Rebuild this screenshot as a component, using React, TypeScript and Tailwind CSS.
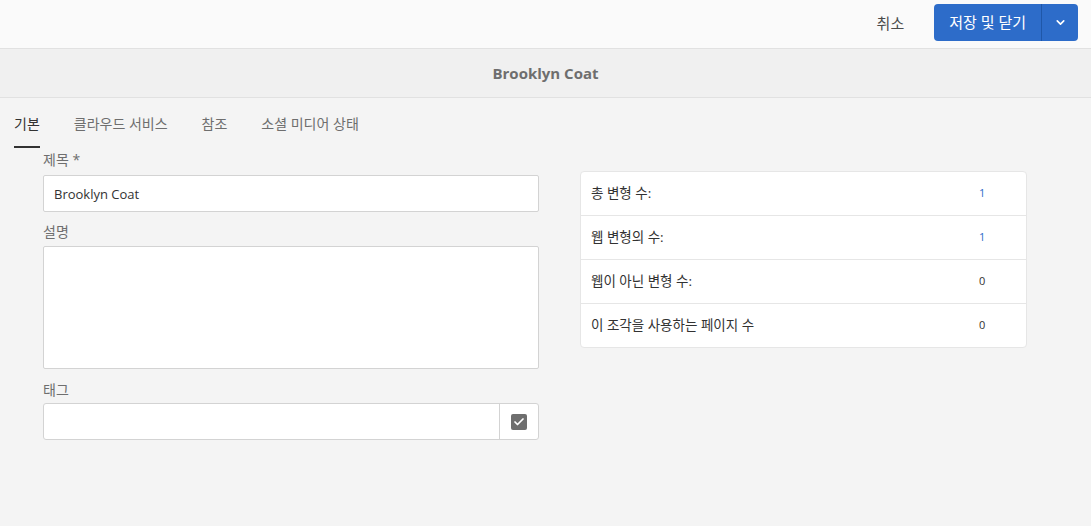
import { ChevronDown, Check } from "lucide-react"

const font = { fontFamily: '"Open Sans", "Noto Sans CJK KR", sans-serif' }

const stats = [
  { label: "총 변형 수:", value: "1", link: true },
  { label: "웹 변형의 수:", value: "1", link: true },
  { label: "웹이 아닌 변형 수:", value: "0", link: false },
  { label: "이 조각을 사용하는 페이지 수", value: "0", link: false },
]

const tabs = ["기본", "클라우드 서비스", "참조", "소셜 미디어 상태"]

export default function App() {
  return (
    <div className="w-[1091px] h-[526px] bg-[#f4f4f4] text-[#4b4b4b] overflow-hidden" style={font}>
      {/* top action bar */}
      <div className="h-[49px] bg-[#fafafa] border-b border-[#e1e1e1] flex items-center justify-end pr-[13px]">
        <button className="text-[15px] text-[#4b4b4b] mr-[30px] mt-[-2px]">취소</button>
        <div className="flex h-[37px] mt-[-3px] rounded-[4px] bg-[#2d6cc9] text-white overflow-hidden">
          <button className="px-[15px] text-[15px] border-r border-[#1f57a8]">저장 및 닫기</button>
          <button className="w-[36px] flex items-center justify-center">
            <ChevronDown size={13} strokeWidth={3} />
          </button>
        </div>
      </div>

      {/* title */}
      <div className="h-[49px] bg-[#f0f0f0] border-b border-[#e1e1e1] flex items-center justify-center">
        <h1 className="text-[15px] font-bold text-[#6e6e6e]">Brooklyn Coat</h1>
      </div>

      {/* tabs */}
      <div className="flex pl-[14px] gap-[34px] h-[50px] items-end">
        {tabs.map((t, i) => (
          <div
            key={t}
            className={
              i === 0
                ? "text-[14px] text-[#323232] pb-[12px] border-b-2 border-[#323232]"
                : "text-[14px] text-[#6e6e6e] pb-[12px] border-b-2 border-transparent"
            }
          >
            {t}
          </div>
        ))}
      </div>

      <div className="flex pl-[43px] gap-[41px] mt-[4px]">
        {/* form */}
        <div className="w-[496px] flex flex-col">
          <label className="text-[14px] text-[#6e6e6e] leading-[16px]">제목 *</label>
          <input
            readOnly
            value="Brooklyn Coat"
            className="mt-[7px] h-[37px] bg-white border border-[#d3d3d3] rounded-[2px] px-[10px] text-[13px] text-[#323232] outline-none"
            style={font}
          />
          <label className="mt-[12px] text-[14px] text-[#6e6e6e] leading-[16px]">설명</label>
          <textarea
            readOnly
            className="mt-[6px] h-[123px] bg-white border border-[#d3d3d3] rounded-[2px] resize-none outline-none"
          />
          <label className="mt-[13px] text-[14px] text-[#6e6e6e] leading-[16px]">태그</label>
          <div className="mt-[5px] h-[37px] flex bg-white border border-[#d3d3d3] rounded-[3px]">
            <div className="flex-1" />
            <div className="w-[39px] border-l border-[#d3d3d3] flex items-center justify-center">
              <div className="w-[16px] h-[16px] rounded-[2px] bg-[#6e6e6e] flex items-center justify-center">
                <Check size={12} strokeWidth={3.5} className="text-white" />
              </div>
            </div>
          </div>
        </div>

        {/* stats card */}
        <div className="w-[447px] mt-[19px] self-start bg-white border border-[#e6e6e6] rounded-[4px]">
          {stats.map((s, i) => (
            <div
              key={s.label}
              className={
                i < stats.length - 1
                  ? "h-[44px] flex items-center border-b border-[#e6e6e6]"
                  : "h-[43px] flex items-center"
              }
            >
              <span className="pl-[10px] flex-1 text-[13.5px] text-[#323232]">{s.label}</span>
              <span
                className={
                  s.link
                    ? "w-[47px] text-[11px] text-[#2d6cc9]"
                    : "w-[47px] text-[11px] text-[#323232]"
                }
              >
                {s.value}
              </span>
            </div>
          ))}
        </div>
      </div>
    </div>
  )
}
